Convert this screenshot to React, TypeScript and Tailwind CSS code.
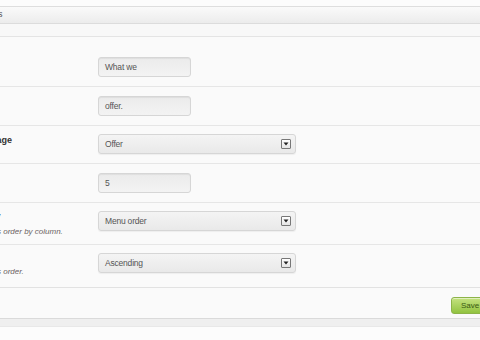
import React from "react";

function Arrow() {
  return (
    <div className="w-[10px] h-[10px] border border-[#777] rounded-[1px] bg-gradient-to-b from-[#ffffff] to-[#e4e4e4] flex items-center justify-center">
      <svg width="6" height="4" viewBox="0 0 6 4">
        <path d="M0.5 0.5 L5.5 0.5 L3 3.5 Z" fill="#222" />
      </svg>
    </div>
  );
}

function TextBox({ value }: { value: string }) {
  return (
    <div className="w-[93px] h-[20px] rounded-[3px] border border-[#d6d6d6] bg-gradient-to-b from-[#ebebeb] to-[#f3f3f3] shadow-[inset_0_1px_1px_rgba(0,0,0,0.06)] flex items-center pl-[6px] text-[8.5px] tracking-[-0.2px] text-[#555]">
      {value}
    </div>
  );
}

function Select({ value }: { value: string }) {
  return (
    <div className="w-[198px] h-[20px] rounded-[3px] border border-[#d6d6d6] bg-gradient-to-b from-[#f4f4f4] to-[#e9e9e9] shadow-[0_1px_1px_rgba(0,0,0,0.05)] flex items-center justify-between pl-[6px] pr-[4px] text-[8.5px] tracking-[-0.2px] text-[#555]">
      <span>{value}</span>
      <Arrow />
    </div>
  );
}

export default function App() {
  return (
    <div className="w-[480px] h-[340px] overflow-hidden bg-[#fcfcfc] pt-[6px] font-['Liberation_Sans',Arial,sans-serif]">
      <div className="border-t border-[#dedede]">
        <div className="h-[17px] bg-gradient-to-b from-[#fafafa] to-[#ececec] border-b border-[#dcdcdc] flex items-center">
          <span className="ml-[-30px] text-[9px] text-[#555] whitespace-nowrap">Settings</span>
        </div>
        <div className="h-[13px] bg-[#f8f8f8] border-b border-[#e4e4e4]" />

        <div className="bg-[#fafafa]">
          <div className="h-[50px] border-b border-[#e6e6e6] flex">
            <div className="w-[98px]" />
            <div className="pt-[20px]">
              <TextBox value="What we" />
            </div>
          </div>

          <div className="h-[39px] border-b border-[#e6e6e6] flex">
            <div className="w-[98px]" />
            <div className="pt-[9px]">
              <TextBox value="offer." />
            </div>
          </div>

          <div className="h-[38px] border-b border-[#e6e6e6] flex">
            <div className="w-[98px] overflow-hidden pt-[8px]">
              <div className="ml-[-38px] text-[9px] font-bold text-[#333] whitespace-nowrap">Select page</div>
            </div>
            <div className="pt-[8px]">
              <Select value="Offer" />
            </div>
          </div>

          <div className="h-[39px] border-b border-[#e6e6e6] flex">
            <div className="w-[98px]" />
            <div className="pt-[9px]">
              <TextBox value="5" />
            </div>
          </div>

          <div className="h-[42px] border-b border-[#e6e6e6] flex">
            <div className="w-[98px] overflow-hidden pt-[7px]">
              <div className="ml-[-37px] text-[9px] font-bold text-[#333] whitespace-nowrap">Order by</div>
              <div className="ml-[-35px] mt-[2px] text-[8px] italic text-[#6b6262] whitespace-nowrap">Sort items order by column.</div>
            </div>
            <div className="pt-[8px]">
              <Select value="Menu order" />
            </div>
          </div>

          <div className="h-[43px] border-b border-[#e2e2e2] flex">
            <div className="w-[98px] overflow-hidden pt-[21px]">
              <div className="ml-[-35px] text-[8px] italic text-[#6b6262] whitespace-nowrap">Sort items order.</div>
            </div>
            <div className="pt-[8px]">
              <Select value="Ascending" />
            </div>
          </div>

          <div className="h-[31px] border-b border-[#dadada] flex justify-end items-start pt-[9px]">
            <div className="w-[70px] mr-[-41px] h-[17px] rounded-[3px] border border-[#8db449] bg-gradient-to-b from-[#c5e27f] to-[#92c33f] shadow-[inset_0_1px_0_rgba(255,255,255,0.5)] flex items-center pl-[9px] text-[8px] text-[#3b5a12] whitespace-nowrap">
              Save changes
            </div>
          </div>
        </div>
        <div className="h-[8px] bg-[#efefef] border-b border-[#e8e8e8]" />
      </div>
    </div>
  );
}
